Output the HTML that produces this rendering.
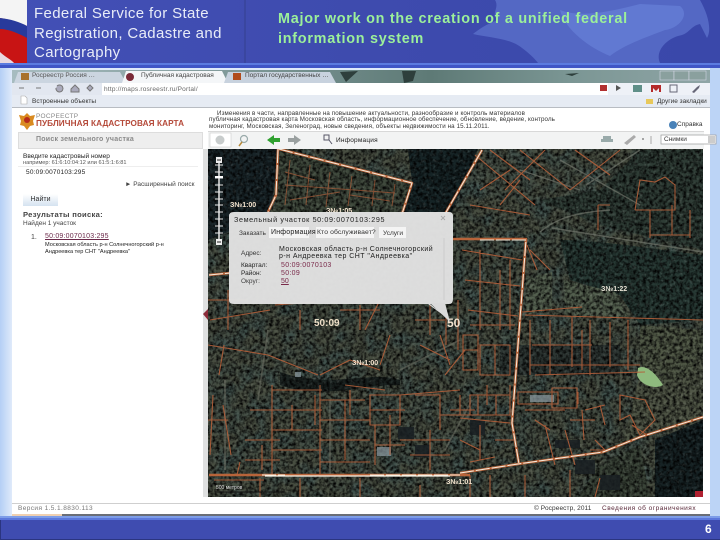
<!DOCTYPE html>
<html><head><meta charset="utf-8"><style>
html,body{margin:0;padding:0;background:#c3d9f7}
body{width:720px;height:540px;position:relative;overflow:hidden;font-family:"Liberation Sans",sans-serif}
.a{position:absolute;white-space:nowrap}
.s{font-size:6.5px;color:#444;line-height:7px}
</style></head><body>
<div class="a" style="left:0;top:68px;width:720px;height:449px;background:linear-gradient(90deg,#b4cff5,#dfeafa 12px)"></div>
<div class="a" style="left:710px;top:68px;width:10px;height:449px;background:#bcd4f6"></div>
<!-- header -->
<svg class="a" style="left:0;top:0" width="720" height="70" viewBox="0 0 720 70">
<defs><linearGradient id="h" x1="0" x2="1"><stop offset="0" stop-color="#4350b6"/><stop offset=".5" stop-color="#3e4bae"/><stop offset="1" stop-color="#3a48aa"/></linearGradient></defs>
<rect width="720" height="63" fill="url(#h)"/>
<rect x="244" width="2" height="63" fill="#3a469f"/>
<path d="M495 0 C500 8 490 14 498 20 C486 24 478 30 473 34 C490 38 510 38 522 48 C530 54 534 58 538 63 L660 63 C655 52 665 40 678 36 C690 34 690 26 700 24 L707 38 C712 30 708 14 700 0Z" fill="#5468c4"/>
<path d="M560 10 C580 18 610 12 640 4 L680 6 C690 14 680 28 665 30 C650 36 625 44 610 56 C590 48 565 30 560 10Z" fill="#6179d2"/>
<path d="M0 0H27V63H0Z" fill="#c81414"/>
<path d="M0 0H27V26C18 22 8 19 0 18Z" fill="#f4f4f4"/>
<path d="M0 18C10 19 20 22 27 26V38C18 33 8 29 0 29Z" fill="#283a9c"/>
<path d="M0 52C5 57 12 60 14 63H0Z" fill="#e8d8e0"/>
<rect y="63" width="720" height="2" fill="#5b7be0"/><rect y="65" width="720" height="3" fill="#3f55c6"/>
</svg>
<div class="a" style="left:34px;top:4px;font-size:15px;line-height:19.5px;color:#e8ecf8;letter-spacing:.36px">Federal Service for State<br>Registration, Cadastre and<br>Cartography</div>
<div class="a" style="left:278px;top:10px;font-size:14.4px;line-height:19.5px;font-weight:bold;color:#9cf09a;letter-spacing:.74px">Major work on the creation of a unified federal<br>information system</div>
<!-- browser chrome -->
<div class="a" style="left:12px;top:70px;width:698px;height:13px;background:linear-gradient(90deg,#a7bcc0,#6f8a88 45%,#5e7a76 60%,#7b9694 80%,#8fa5a6)"></div>
<svg class="a" style="left:0;top:68px" width="720" height="16" viewBox="0 0 720 16">
<path d="M340 4 l18 -1 l-12 11z M402 3 l14 0 l-3 10 l-9 2z M565 6l14 -1 -7 3z" fill="#2e3f3c"/>
<path d="M14 15 L18 4 H120 L126 15Z" fill="#cbd5e0"/>
<path d="M122 15 L126 3 H222 L228 15Z" fill="#f4f6f8"/>
<path d="M224 15 L228 4 H330 L336 15Z" fill="#c8d2de"/>
<rect x="21" y="5" width="8" height="7" fill="#a8722c"/><circle cx="130" cy="9" r="4" fill="#7a2a38"/><rect x="233" y="5" width="8" height="7" fill="#b04c1c"/>
<rect x="660" y="3" width="14" height="9" fill="#8aa09e" stroke="#dde" stroke-width=".5"/><rect x="674" y="3" width="15" height="9" fill="#8aa09e" stroke="#dde" stroke-width=".5"/><rect x="689" y="3" width="17" height="9" fill="#8aa09e" stroke="#dde" stroke-width=".5"/>
</svg>
<div class="a s" style="left:32px;top:72px;color:#555">Росреестр Россия …</div>
<div class="a s" style="left:141px;top:72px;color:#444">Публичная кадастровая</div>
<div class="a s" style="left:245px;top:72px;color:#444">Портал государственных …</div>
<div class="a" style="left:12px;top:83px;width:698px;height:13px;background:#fff"></div>
<div class="a" style="left:12px;top:95px;width:698px;height:13px;background:#e6ebf3;border-bottom:1px solid #b8bcc2;box-sizing:border-box"></div>
<div class="a" style="left:12px;top:83px;width:90px;height:12px;background:#e2e7f0"></div>
<div class="a" style="left:608px;top:83px;width:102px;height:12px;background:#eef1f7"></div>
<div class="a s" style="left:104px;top:86px;color:#666;letter-spacing:.2px">http://maps.rosreestr.ru/Portal/</div>
<div class="a s" style="left:32px;top:98px;color:#333">Встроенные объекты</div>
<div class="a s" style="left:657px;top:98px;color:#333">Другие закладки</div>
<svg class="a" style="left:0;top:80px" width="720" height="30" viewBox="0 0 720 30">
<path d="M19 8h5M36 8h5M56 8a3.5 3.5 0 1 0 1-2M71 9l4-4 4 4v3h-8zM87 8l3-3 3 3-3 3z" stroke="#777" fill="#aab" stroke-width="1"/>
<rect x="600" y="5" width="7" height="6" fill="#b23030"/><path d="M616 5l5 3-5 3z" fill="#555"/><rect x="633" y="5" width="9" height="7" fill="#5f8f88"/><path d="M651 5h10v7h-2V8l-3 3-3-3v4h-2z" fill="#b52a2a"/><rect x="670" y="5" width="7" height="7" fill="none" stroke="#667"/><path d="M692 12l5-5 3-2-1 3-5 5z" fill="#667"/>
<rect x="646" y="19" width="7" height="5" fill="#e8c85a"/><path d="M21 16h4l2 2v6h-6z" fill="#fff" stroke="#aaa" stroke-width=".6"/>
</svg>
<!-- page -->
<div class="a" style="left:12px;top:108px;width:698px;height:409px;background:#fff"></div>
<svg class="a" style="left:17px;top:111px" width="20" height="20" viewBox="0 0 20 20"><path d="M10 2l3 3 5-1-2 6 1 4-4 1-3 4-3-4-4-1 1-4-2-6 5 1z" fill="#d98a20"/><circle cx="10" cy="9" r="3" fill="#b52a1a"/></svg>
<div class="a" style="left:36px;top:113px;font-size:6.5px;color:#888;letter-spacing:.3px">РОСРЕЕСТР</div>
<div class="a" style="left:36px;top:119px;font-size:8.2px;font-weight:bold;color:#b54a3a;letter-spacing:.1px">ПУБЛИЧНАЯ КАДАСТРОВАЯ КАРТА</div>
<div class="a" style="left:217px;top:110px;font-size:6.2px;color:#333;letter-spacing:.12px">Изменения в части, направленные на повышение актуальности, разнообразие и контроль материалов</div>
<div class="a" style="left:209px;top:116px;font-size:6.2px;color:#333;letter-spacing:.12px">публичная кадастровая карта Московская область, информационное обеспечение, обновление, ведение, контроль</div>
<div class="a" style="left:209px;top:123px;font-size:6.2px;color:#333;letter-spacing:.12px">мониторинг, Московская, Зеленоград, новые сведения, объекты недвижимости на 15.11.2011.</div>
<svg class="a" style="left:668px;top:120px" width="10" height="10"><circle cx="5" cy="5" r="4" fill="#4a82b8"/></svg>
<div class="a s" style="left:677px;top:121px;color:#333">Справка</div>
<!-- toolbar -->
<div class="a" style="left:208px;top:131px;width:496px;height:18px;background:#f2f3f3;border-top:1px solid #d8d8d8;box-sizing:border-box"></div>
<svg class="a" style="left:205px;top:130px" width="515" height="20" viewBox="0 0 515 20">
<rect x="5" y="3" width="21" height="14" fill="#fff" stroke="#ccc" stroke-width=".6"/><circle cx="15" cy="10" r="4.5" fill="#c8cccc"/>
<circle cx="39" cy="9" r="3.5" fill="none" stroke="#9aa" stroke-width="1.2"/><path d="M37 12l-3 4" stroke="#b98a3a" stroke-width="1.5"/>
<path d="M62 10l7-5v3h6v4h-6v3z" fill="#2fa02f"/><path d="M96 10l-7-5v3h-6v4h6v3z" fill="#9aa0a0"/>
<path d="M119 5h5v5h-5zM124 10l3 4" stroke="#556" fill="none"/>
<path d="M396 9h12v3h-12zM398 6h8v3h-8z" fill="#9aa" /><path d="M419 13l10-8 2 2-9 8z" fill="#aaa"/><path d="M437 9h2" stroke="#555"/><path d="M446 6v8" stroke="#aaa"/>
<rect x="456" y="5" width="55" height="9" fill="#fff" stroke="#999" stroke-width=".7"/><rect x="503" y="6" width="7" height="7" fill="#ccc"/>
</svg>
<div class="a s" style="left:336px;top:137px;color:#222;letter-spacing:.2px">Информация</div>
<div class="a s" style="left:664px;top:136px;color:#333">Снимки</div>
<!-- left panel -->
<div class="a" style="left:18px;top:132px;width:185px;height:17px;background:#eeeeee;border:1px solid #ddd;box-sizing:border-box"></div>
<div class="a" style="left:36px;top:136px;font-size:7px;font-weight:bold;color:#8a8a8a;letter-spacing:.25px">Поиск земельного участка</div>
<div class="a" style="left:203px;top:149px;width:5px;height:348px;background:#dfe0e0"></div>
<div class="a s" style="left:23px;top:153px;color:#222">Введите кадастровый номер</div>
<div class="a" style="left:23px;top:160px;font-size:5.6px;color:#555">например: 61:6:10:04:12 или 61:5:1:6:81</div>
<div class="a" style="left:18px;top:166px;width:180px;height:1px;background:#eee"></div>
<div class="a s" style="left:26px;top:169px;color:#222;letter-spacing:.2px">50:09:0070103:295</div>
<div class="a s" style="left:125px;top:181px;color:#444">► Расширенный поиск</div>
<div class="a" style="left:23px;top:194px;width:35px;height:12px;background:linear-gradient(#fff,#d4e2f0);font-size:7px;color:#333;text-align:center;line-height:11px">Найти</div>
<div class="a" style="left:23px;top:210px;font-size:7.6px;font-weight:bold;color:#444;letter-spacing:.3px">Результаты поиска:</div>
<div class="a s" style="left:23px;top:220px;color:#444">Найден 1 участок</div>
<div class="a" style="left:31px;top:234px;font-size:7px;color:#444">1.</div>
<div class="a" style="left:45px;top:233px;font-size:7px;color:#6b2a4a;text-decoration:underline;letter-spacing:.2px">50:09:0070103:295</div>
<div class="a" style="left:45px;top:242px;font-size:5.6px;line-height:7px;color:#222">Московская область р-н Солнечногорский р-н<br>Андреевка тер СНТ "Андреевка"</div>
<!-- map -->
<svg class="a" style="left:0;top:0" width="720" height="540" viewBox="0 0 720 540">
<defs>
<filter id="n" x="0" y="0" width="100%" height="100%"><feTurbulence type="fractalNoise" baseFrequency=".3" numOctaves="2" seed="4"/><feColorMatrix values="0 0 0 0 0  0 0 0 0 0  0 0 0 0 0  2.2 0 0 0 -.78"/></filter>
<filter id="d" x="0" y="0" width="100%" height="100%"><feTurbulence type="fractalNoise" baseFrequency=".06" numOctaves="2" seed="12"/><feColorMatrix values="0 0 0 0 .05  0 0 0 0 .08  0 0 0 0 .07  3 0 0 0 -1.2"/></filter>
<filter id="l" x="0" y="0" width="100%" height="100%"><feTurbulence type="fractalNoise" baseFrequency=".3" numOctaves="2" seed="9"/><feColorMatrix values="0 0 0 0 .75  0 0 0 0 .8  0 0 0 0 .75  0 2.4 0 0 -1.32"/></filter>
<clipPath id="c"><rect x="208" y="149" width="495" height="348"/></clipPath>
</defs>
<g clip-path="url(#c)">
<rect x="208" y="149" width="495" height="348" fill="#474d40"/>
<rect x="208" y="149" width="495" height="348" filter="url(#d)"/>
<!-- regions -->
<path d="M208 149H280L270 215L208 240Z" fill="#182428"/>
<path d="M408 149H478L452 212H404L412 182Z" fill="#162426"/>
<path d="M280 150L412 184L402 215H275Z" fill="#3f493c"/>
<path d="M560 240C600 240 660 250 703 255V320L640 325L620 295L570 280Z" fill="#263833"/>
<path d="M526 278L552 272V310L526 315ZM564 280L615 292L630 318L565 315Z" fill="#535f4e"/>
<path d="M540 200L600 225L703 250V150H640L600 190Z" fill="#2e3c35"/>
<path d="M655 440L703 420V497H655Z" fill="#162224"/>
<path d="M640 445L600 465L578 497H650Z" fill="#3a4438"/>
<path d="M280 372C330 390 370 370 400 380L400 385C360 385 320 400 280 385Z" fill="#1a2220"/>
<path d="M640 375l40-15 23-2v60l-50 15-30 10z" fill="#4f5545"/>
<path d="M655 388L690 375L703 350V330L640 325L640 360Z" fill="#4f5745"/>
<path d="M500 345H620V375H500Z" fill="#2c3532"/>
<!-- noise -->
<rect x="208" y="149" width="495" height="348" filter="url(#n)"/>
<rect x="208" y="149" width="495" height="348" filter="url(#l)" opacity=".18"/>
<path d="M638 368C645 364 655 372 663 385C655 390 640 385 637 375Z" fill="#8fba7e"/>
<!-- roads -->
<path d="M560 160L640 205M586 185L640 150M540 232C560 215 585 212 610 210M552 228L703 252M520 170L580 190" stroke="#6f746a" stroke-width="1.4" fill="none" opacity=".7"/>
<path d="M268 330L258 400M225 380L225 470M330 400V475M400 370L460 340M472 400L445 450" stroke="#6b6e62" stroke-width="1.8" fill="none" opacity=".6"/>
<!-- buildings -->
<path d="M398 427h16v12h-16zM415 445h15v12h-15zM600 475h20v15h-20zM470 420h15v15h-15zM575 460h20v14h-20zM555 440h25v8h-25z" fill="#191f22" opacity=".85"/>
<path d="M377 447h14v9h-14zM530 395h24v7h-24zM295 372h6v5h-6z" fill="#8a98a0" opacity=".7"/>
<!-- parcels -->
<g fill="none" stroke="#b25f3a" stroke-width="1" opacity=".65">
<path d="M290 160l-5 45M310 165l-4 40M330 172l-4 35M352 176l-4 30M375 180l-3 26M395 184l-3 22M285 185l110 8M290 200l50-8M285 172l30 8M350 195l40 6"/>
</g>
<g fill="none" stroke="#b25f3a" stroke-width="1.1" opacity=".9">
<path d="M208 300h40M228 290v40M210 320l60-10M275 305l40 -3M300 310v20M340 310h40M360 305v25M380 300l-15 30M415 320h30M430 305v30M446 310v35M458 300v50"/>
<path d="M475 155l60 50M490 150l40 30M520 150l50 40M545 150l-40 40M470 205l60 10M480 190l30-20M500 205l20-25M575 150l35 25M620 150l-50 40M635 210h40v-25l-10-8-10 5-15-2-5 30M650 235h40M650 210v28M672 205v30M690 210v28M598 205v25M610 205l-12 0"/>
<path d="M462 250l60 10M465 280l55 6M468 310l50 6M470 325h45M480 250v80M500 270v60M510 260v70M530 250l20 20M527 245l10 25"/>
<path d="M525 315L703 320M522 312l60-5M530 320V375M550 320v55M572 317v50M590 320v55M610 322v45M532 345h60M530 365h110M582 330v40M535 375l110 -3M628 320v50"/>
<path d="M463 335h15v35h-15zM463 350h15M480 345h30v30h-30zM495 345v30M487 385v20M510 385v20M470 395h40v20h-40zM478 395v20M496 395v20M460 418l50 5"/>
<path d="M518 392h40v12h-40zM552 388h25v20h-25zM578 392v12M525 410h40"/>
<path d="M585 410l20-5M582 410l2 30M600 405l5 20M570 420h25M620 395l25 5 10 20-15 15-10-20-10 5zM632 425l15 10M595 440l10 10M590 450l15 0"/>
<path d="M208 345l60 10M268 355l50 20M320 375l30-15M350 360l30 10M390 335l-10 30M420 345l30 15M440 335l10 30M465 350l-20 25M224 345l-5 30"/>
<path d="M272 385v90M272 390h50M272 410h50M272 430h50M272 450h50M292 405v25M315 395v30M320 385v90M320 400h45M320 420h50M320 440h50M320 462h50M345 400v60M345 385l40 5M350 390v25M370 395h30v30h-30zM370 410h35M375 425v40M390 415v40M375 445h30M400 395l60 -5M415 395h25v35M400 440h50M430 430v40M450 410l25 0M460 395v20M440 415h30M410 455h40"/>
<path d="M213 395l-3 60M223 405l8 50M245 440h35M245 460h35M250 410h30M262 445v25M240 462l-3 13M208 420h20"/>
<path d="M360 478v19M260 478v19M300 478v19M420 485v12M525 475v22M570 470v27M490 475v22M214 480h50M600 478l-5 19"/>
<path d="M460 440l20 10M480 425v35M495 440h20M470 475v22M470 462l25-5M535 420l15 10M545 425l10 40M565 430l10 35"/>
</g>
<!-- boundary lines -->
<g fill="none" stroke-linejoin="round">
<path d="M278 149L276 195L268 212M279 149L412 183L402 214M482 150L445 214M209 275L230 273M453 239H526L518 345L512 423L519 464M209 475H470M460 473L518 464L603 452L640 437L703 417" stroke="#b8643a" stroke-width="2.6"/>
<path d="M278 149L276 195L268 212M279 149L412 183L402 214M482 150L445 214M209 275L230 273M480 240H526L518 345L512 423L519 464M262 475H285M370 475H460M460 473L518 464L603 452L640 437L703 417" stroke="#f6ecdc" stroke-width="1" stroke-dasharray="14 2"/>
<path d="M265 476H450" stroke="#fbf4e8" stroke-width="1.2"/>
</g>
<path d="M695 491h8v6h-8z" fill="#b02030"/>
<g font-family="'Liberation Sans',sans-serif" font-weight="bold" fill="#f5e4cf" font-size="7">
<text x="230" y="207">З№1:00</text>
<text x="326" y="213">З№1:05</text>
<text x="352" y="365">З№1:00</text>
<text x="601" y="291" fill="#e8e4d6">З№1:22</text>
<text x="446" y="484">З№1:01</text>
<text x="314" y="326" font-size="10" fill="#efe0c8">50:09</text>
<text x="447" y="327" font-size="12" fill="#f2e3cf">50</text>
</g>
<!-- scale -->
<path d="M215 489V492H284V489" stroke="#111" fill="none" stroke-width="1"/>
<text x="216" y="489" font-size="5" fill="#ddd" font-family="'Liberation Sans',sans-serif">500 метров</text>
</g>
<!-- zoom control -->
<g stroke="#e8e8e8" fill="none">
<path d="M219 160V244" stroke-width="1.5"/><path d="M215 165h8M215 172h8M215 178h8M215 185h8M215 192h8M215 199h8M215 205h8M215 212h8M215 219h8M215 226h8M215 233h8" stroke-width="1"/>
</g>
<rect x="216" y="157" width="6" height="6" fill="#eee"/><rect x="216" y="239" width="6" height="6" fill="#eee"/><path d="M217 160h4M217 242h4" stroke="#222"/>
<rect x="215" y="176" width="8" height="2" fill="#fff"/>
<!-- popup -->
<path d="M234 212H449Q453 212 453 216V299Q453 304 449 304H430L454 323L428 304H234Q229 304 229 300V216Q229 212 234 212Z" fill="#e2e2e2" opacity=".97"/>
<path d="M430 303L450 322L445 303Z" fill="#dadada"/>
<path d="M203 314l5-5v11z" fill="#8c2c3a"/>
<rect x="269" y="227" width="40" height="11" fill="#f4f4f4"/><rect x="316" y="227" width="58" height="11" fill="#f4f4f4"/><rect x="379" y="227" width="27" height="11" fill="#f4f4f4"/>
<path d="M444 238V300" stroke="#c8c8c8" stroke-width=".8" fill="none"/>
<path d="M441 216l4 4m0-4l-4 4" stroke="#aaa"/>
</svg>
<div class="a" style="left:234px;top:215px;font-size:7.2px;color:#222;letter-spacing:.62px">Земельный участок 50:09:0070103:295</div>
<div class="a s" style="left:239px;top:230px;color:#333">Заказать</div>
<div class="a" style="left:271px;top:229px;font-size:7px;color:#222;letter-spacing:.2px">Информация</div>
<div class="a" style="left:317px;top:229px;font-size:6.8px;color:#333;letter-spacing:.1px">Кто обслуживает?</div>
<div class="a s" style="left:383px;top:230px;color:#333">Услуги</div>
<div class="a s" style="left:241px;top:250px;color:#333">Адрес:</div>
<div class="a" style="left:279px;top:246px;font-size:7px;line-height:7px;color:#1c1c1c;letter-spacing:.46px">Московская область р-н Солнечногорский<br>р-н Андреевка тер СНТ "Андреевка"</div>
<div class="a s" style="left:241px;top:262px;color:#222">Квартал:</div>
<div class="a" style="left:281px;top:262px;font-size:7px;color:#7a2a4a;letter-spacing:.3px">50:09:0070103</div>
<div class="a s" style="left:241px;top:270px;color:#222">Район:</div>
<div class="a" style="left:281px;top:270px;font-size:7px;color:#7a2a4a;letter-spacing:.3px">50:09</div>
<div class="a s" style="left:241px;top:278px;color:#444">Округ:</div>
<div class="a" style="left:281px;top:278px;font-size:7px;color:#7a2a4a;text-decoration:underline">50</div>
<!-- status bar -->
<div class="a" style="left:12px;top:503px;width:698px;height:1px;background:#cfcfcf"></div>
<div class="a s" style="left:18px;top:505px;color:#777;letter-spacing:.4px">Версия 1.5.1.8830.113</div>
<div class="a s" style="left:534px;top:505px;color:#333;letter-spacing:.1px">© Росреестр, 2011</div>
<div class="a s" style="left:602px;top:505px;color:#5a2a3a;letter-spacing:.5px">Сведения об ограничениях</div>
<div class="a" style="left:12px;top:514px;width:698px;height:2px;background:#6a6e76"></div>
<div class="a" style="left:12px;top:514px;width:50px;height:2px;background:#f0d0b0"></div>
<!-- footer -->
<div class="a" style="left:0;top:516px;width:720px;height:2px;background:#7d9de8"></div>
<div class="a" style="left:0;top:518px;width:720px;height:2px;background:#5c78dc"></div>
<div class="a" style="left:0;top:520px;width:720px;height:20px;background:#3f4cb0;border-left:1px solid #2b3580;border-bottom:1px solid #2b3580;box-sizing:border-box"></div>
<div class="a" style="left:705px;top:522px;font-size:12px;font-weight:bold;color:#fff">6</div>
</body></html>
